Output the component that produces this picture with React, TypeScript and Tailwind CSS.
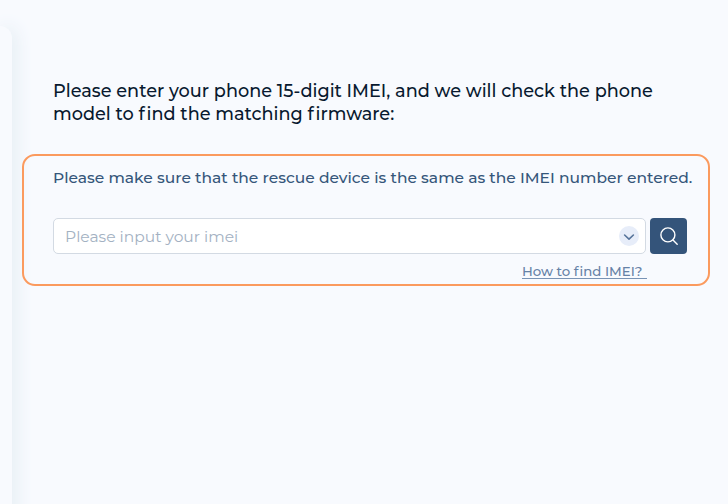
import { useState } from "react";

function LeftPanel() {
  return (
    <aside className="mt-[26px] h-[520px] w-3 shrink-0 rounded-tr-[12px] bg-[#f8fafe] shadow-[3px_0_18px_0_#dfeaf1]" />
  );
}

function ImeiInput() {
  const [imei, setImei] = useState("");
  return (
    <div className="flex h-9 w-[593px] items-center rounded-[5px] border border-[#d3dae3] bg-white pr-[6px] pl-[11px]">
      <input
        value={imei}
        onChange={(e) => setImei(e.target.value)}
        placeholder="Please input your imei"
        className="min-w-0 flex-1 bg-transparent pt-px text-[15.5px] font-normal text-[#35567a] outline-none placeholder:text-[#a3b1c2]"
      />
      <button className="flex size-5 items-center justify-center rounded-full bg-[#e7edf9]" aria-label="History">
        <svg className="mt-px" width="12" height="8" viewBox="0 0 12 8" fill="none" stroke="#56739a" strokeWidth="1.6" strokeLinecap="round" strokeLinejoin="round">
          <path d="M1.6 2 6 6.1 10.4 2" />
        </svg>
      </button>
    </div>
  );
}

function ImeiCard() {
  return (
    <section className="ml-[10px] h-[132px] w-[688px] rounded-[13px] border-2 border-[#fb9a5e] pt-[12px] pl-[29px]">
      <p className="h-5 text-[15.5px] leading-5 font-medium whitespace-nowrap text-[#35567a]">
        Please make sure that the rescue device is the same as the IMEI number entered.
      </p>
      <div className="mt-[30px] flex gap-1">
        <ImeiInput />
        <button className="flex h-9 w-[37px] items-center justify-center rounded bg-[#34547a]" aria-label="Search">
          <svg width="20" height="20" viewBox="0 0 20 20" fill="none" stroke="#fff" strokeWidth="1.4" strokeLinecap="round">
            <circle cx="8.9" cy="8.9" r="7" />
            <path d="m14 14 4.2 4.2" />
          </svg>
        </button>
      </div>
      <div className="mt-[8px] flex w-[594px] justify-end">
        <a className="h-[17px] w-[125px] border-b border-[#7893b5] text-[13.3px] leading-[19px] font-medium whitespace-nowrap text-[#6682a7]">
          How to <span className="tracking-[1px]">f</span>ind IMEI?
        </a>
      </div>
    </section>
  );
}

export default function App() {
  return (
    <div className="flex h-[504px] w-[728px] overflow-hidden bg-[#f8fafe] font-['Montserrat','Inter',sans-serif] [font-variant-ligatures:none]">
      <LeftPanel />
      <main className="relative min-w-0 flex-1 pt-[79px]">
        <h1 className="ml-[41px] text-[17.7px] leading-[23px] font-medium whitespace-nowrap text-[#08192f]">
          Please enter your phone 15-digit IMEI, and we will check the phone
          <br />
          model to <span className="tracking-[1.8px]">f</span>ind the matching <span className="tracking-[1.8px]">f</span>irmware:
        </h1>
        <div className="mt-[29px]">
          <ImeiCard />
        </div>
      </main>
    </div>
  );
}
